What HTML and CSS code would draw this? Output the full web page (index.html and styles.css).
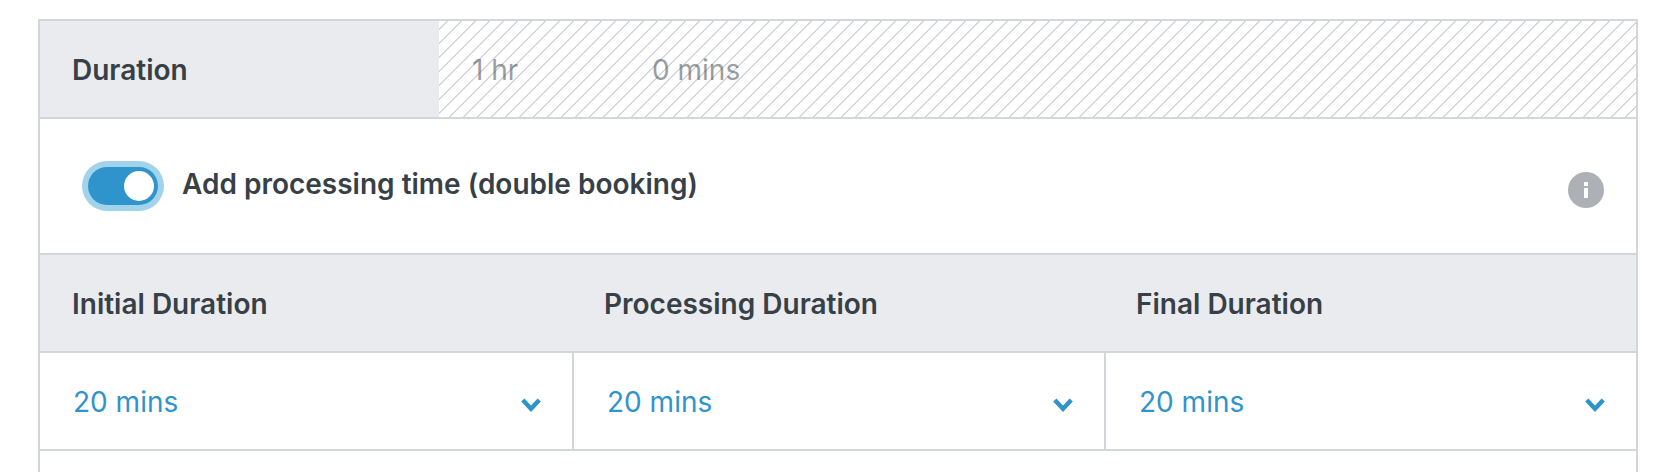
FILE: index.html
```
<!DOCTYPE html>
<html lang="en">
<head>
    <meta charset="UTF-8">
    <meta name="viewport" content="width=device-width, initial-scale=1.0">
    <title>Service Duration</title>
    <link rel="stylesheet" href="styles.css">
</head>
<body>

    <form class="duration-form">
        <div class="duration-row">
            <label class="row-label" for="duration-hours">Duration</label>
            <div class="locked-fields">
                <select id="duration-hours" class="locked-select" disabled>
                    <option>1 hr</option>
                </select>
                <select class="locked-select" aria-label="Duration minutes" disabled>
                    <option>0 mins</option>
                </select>
            </div>
        </div>

        <div class="toggle-row">
            <input type="checkbox" role="switch" class="toggle" id="processing-toggle" checked>
            <label class="toggle-label" for="processing-toggle">Add processing time (double booking)</label>
            <button type="button" class="info-btn" aria-label="About processing time">
                <svg width="36" height="36" viewBox="0 0 36 36">
                    <circle cx="18" cy="18" r="18" fill="#adb0b5"/>
                    <path d="M16 10h4v4h-4zM16 16h4v10h-4z" fill="#fff"/>
                </svg>
            </button>
        </div>

        <div class="segments">
            <div class="segment">
                <label class="segment-label" for="initial">Initial Duration</label>
                <div class="segment-field">
                    <select id="initial" class="segment-select">
                        <option>20 mins</option>
                    </select>
                    <svg class="chevron" width="20" height="14" viewBox="0 0 20 14">
                        <path d="M1.8 2l8.2 8.8L18.2 2" fill="none" stroke="#2f94cb" stroke-width="4.4"/>
                    </svg>
                </div>
            </div>
            <div class="segment">
                <label class="segment-label" for="processing">Processing Duration</label>
                <div class="segment-field">
                    <select id="processing" class="segment-select">
                        <option>20 mins</option>
                    </select>
                    <svg class="chevron" width="20" height="14" viewBox="0 0 20 14">
                        <path d="M1.8 2l8.2 8.8L18.2 2" fill="none" stroke="#2f94cb" stroke-width="4.4"/>
                    </svg>
                </div>
            </div>
            <div class="segment">
                <label class="segment-label" for="final">Final Duration</label>
                <div class="segment-field">
                    <select id="final" class="segment-select">
                        <option>20 mins</option>
                    </select>
                    <svg class="chevron" width="20" height="14" viewBox="0 0 20 14">
                        <path d="M1.8 2l8.2 8.8L18.2 2" fill="none" stroke="#2f94cb" stroke-width="4.4"/>
                    </svg>
                </div>
            </div>
        </div>
    </form>

</body>
</html>
```
FILE: styles.css
```
* {
    box-sizing: border-box;
}
body {
    margin: 0;
    min-height: 100vh;
    padding: 19px 30px 0 38px;
    display: flex;
    background-color: #fff;
    color: #373f47;
    font-family: Inter, sans-serif;
    font-size: 28px;
    line-height: 34px;
}
select {
    appearance: none;
    margin: 0;
    border: 0;
    border-radius: 0;
    background: transparent;
    font: inherit;
}
.duration-form {
    flex: 1;
    border: 2px solid #d3d7db;
    border-bottom: 0;
}
.duration-row {
    display: flex;
    border-bottom: 2px solid #d3d7db;
}
.row-label {
    width: 25%;
    padding: 32px 32px 30px;
    background-color: #eaebef;
    font-weight: 600;
}
/* diagonal hatching marks the read-only fields */
.locked-fields {
    flex: 1;
    display: flex;
    padding: 2px 33px 0;
    background-image: linear-gradient(135deg, transparent 26%, #d3d7db 27%, #d3d7db 33%, transparent 34%, transparent 76%, #d3d7db 77%, #d3d7db 83%, transparent 84%);
    background-size: 14px 14px;
}
.locked-select {
    width: 180px;
    color: #373f47;
    opacity: 0.5;
}
.toggle-row {
    display: flex;
    align-items: flex-start;
    padding: 48px 32px 45px;
    border-bottom: 2px solid #d3d7db;
}
.toggle {
    appearance: none;
    width: 70px;
    height: 38px;
    margin: 0 24px 0 16px;
    padding: 4px;
    border-radius: 20px;
    background-color: #2f94cb;
    box-shadow: 0 0 0 6px #a1d4ea;
    cursor: pointer;
}
.toggle::before {
    content: "";
    display: block;
    width: 30px;
    height: 30px;
    border-radius: 50%;
    background-color: #fff;
}
.toggle:checked::before {
    margin-left: auto;
}
.toggle-label {
    flex: 1;
    font-weight: 600;
}
.info-btn {
    display: flex;
    margin-top: 5px;
    padding: 0;
    border: 0;
    background: none;
    cursor: pointer;
}
.segments {
    display: grid;
    grid-template-columns: repeat(3, 1fr);
}
.segment-label {
    display: block;
    padding: 32px 32px 30px;
    background-color: #eaebef;
    border-bottom: 2px solid #d3d7db;
    font-weight: 600;
}
.segment-field {
    position: relative;
    border-bottom: 2px solid #d3d7db;
}
.segment + .segment .segment-field {
    border-left: 2px solid #d3d7db;
}
.segment-select {
    display: block;
    width: 100%;
    padding: 32px 33px 30px;
    color: #2f94cb;
    cursor: pointer;
}
.chevron {
    position: absolute;
    top: 45px;
    right: 31px;
    pointer-events: none;
}
```
